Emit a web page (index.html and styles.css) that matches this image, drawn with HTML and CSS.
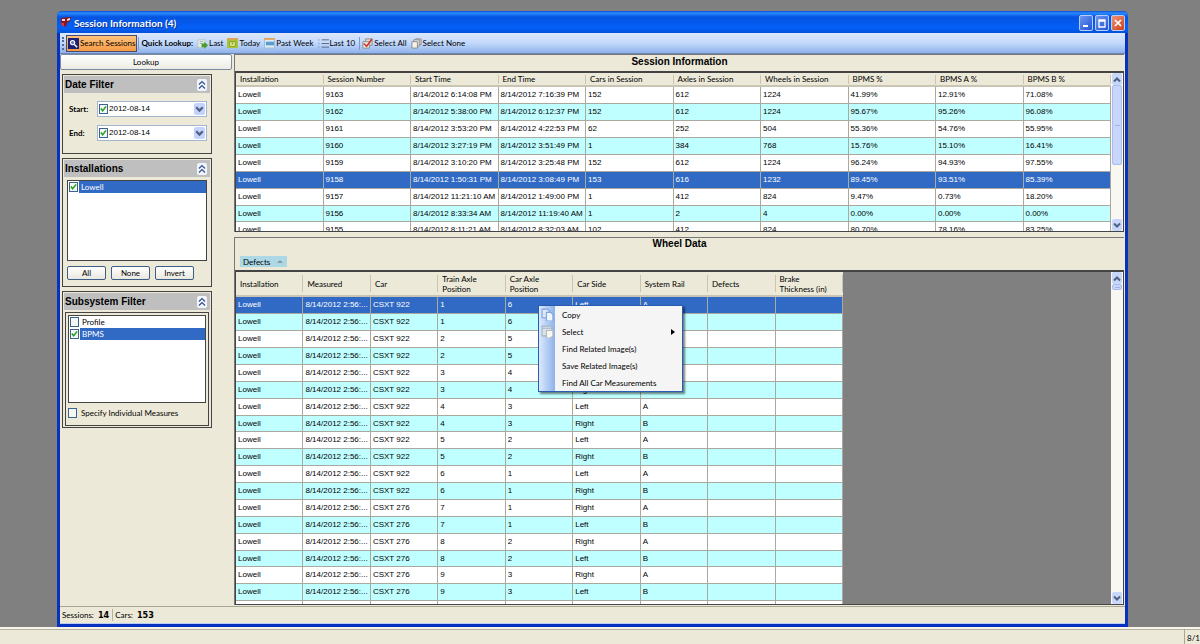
FILE: index.html
```html
<!DOCTYPE html>
<html lang="en">
<head>
    <meta charset="UTF-8">
    <meta name="viewport" content="width=device-width, initial-scale=1.0">
    <title>Session Information (4)</title>
    <link rel="stylesheet" href="styles.css">
</head>
<body>
    <!-- shared icon shapes -->
    <svg class="defs" width="0" height="0" aria-hidden="true">
        <symbol id="down" viewBox="0 0 10 10"><path d="M2 3l3 3 3-3" fill="none" stroke="#4d6185" stroke-width="2"/></symbol>
        <symbol id="up" viewBox="0 0 10 10"><path d="M2 7l3-3 3 3" fill="none" stroke="#4d6185" stroke-width="2"/></symbol>
        <symbol id="collapse" viewBox="0 0 10 10"><path d="M2 5l3-3 3 3M2 9l3-3 3 3" fill="none" stroke="#33508f" stroke-width="1.2"/></symbol>
    </svg>

    <main class="desktop">
        <div class="window">
            <header class="titlebar">
                <svg class="app-icon" viewBox="0 0 12 12"><path d="M1 1l10-1-1 4-3 2-1 4-2-1V6H1z" fill="#8e1520"/><path d="M2 2h3v2H2zM7 2l3-1v2L7 4z" fill="#f5dede"/><path d="M1 6h3v3H2z" fill="#d63a32"/></svg>
                <h1>Session Information (4)</h1>
                <button class="win-btn" aria-label="Minimize"><svg viewBox="0 0 12 14"><path d="M3 10h5" stroke="#fff" stroke-width="2"/></svg></button>
                <button class="win-btn" aria-label="Maximize"><svg viewBox="0 0 12 14"><path d="M3 4h6v7H3zM3 5h6" fill="none" stroke="#fff" stroke-width="1.3"/></svg></button>
                <button class="win-btn close" aria-label="Close"><svg viewBox="0 0 12 14"><path d="M3 4l6 6M9 4l-6 6" stroke="#fff" stroke-width="1.7"/></svg></button>
            </header>

            <nav class="toolbar">
                <span class="grip"></span>
                <button class="tool active">
                    <svg viewBox="0 0 12 12"><path d="M0 0h12v12H0z" fill="#1d1f72"/><circle cx="5" cy="5" r="2.3" fill="#5f78c8" stroke="#fff" stroke-width="1.2"/><path d="M7 7l3 3" stroke="#fff" stroke-width="1.6"/></svg>Search Sessions
                </button>
                <span class="sep"></span>
                <strong>Quick Lookup:</strong>
                <button class="tool"><svg viewBox="0 0 12 12"><path d="M1 2h8v8H1z" fill="#e7f0e2" stroke="#b9cbb9"/><path d="M3 4h4M3 6h3" stroke="#8fb0c8"/><path d="M5 6h3V4l4 4-4 4v-2H5z" fill="#4a9c34"/></svg>Last</button>
                <button class="tool"><svg viewBox="0 0 12 12"><path d="M0 1h12v10H0z" fill="#a9c23a"/><path d="M0 0h12v2H0z" fill="#e2a456"/><path d="M3 4h6v5H3z" fill="#eef59c" stroke="#7f9a20"/><path d="M5 5h2v2H5z" fill="#7f9a20"/></svg>Today</button>
                <button class="tool"><svg viewBox="0 0 12 12"><path d="M0 1h12v10H0z" fill="#dcebf5"/><path d="M0 0h12v2H0z" fill="#e2a456"/><path d="M2 4h9v4H2z" fill="#5b9cd0"/><path d="M.5 2v9h11V2" fill="none" stroke="#9fb7cc"/></svg>Past Week</button>
                <button class="tool"><svg viewBox="0 0 12 12"><path d="M4 2h8M4 6h8M4 10h8" stroke="#56657c"/><path d="M1 1v10" stroke="#7ea0c8" stroke-dasharray="2 2"/></svg>Last 10</button>
                <span class="sep"></span>
                <button class="tool"><svg viewBox="0 0 12 12"><path d="M4 1h7v7H4z" fill="#ddd" stroke="#888"/><path d="M1 4h7v7H1z" fill="#f4f0ea" stroke="#888"/><path d="M2 6l3 3 6-8" fill="none" stroke="#d3372b" stroke-width="1.8"/></svg>Select All</button>
                <button class="tool"><svg viewBox="0 0 12 12"><path d="M5 1h6v6H5z" fill="#ddd" stroke="#888"/><path d="M3 2h6v7H3z" fill="#eee" stroke="#888"/><path d="M1 4h6v7H1z" fill="#f4f0ea" stroke="#888"/></svg>Select None</button>
            </nav>

            <div class="content">
                <aside class="sidebar">
                    <button class="lookup">Lookup</button>

                    <section class="box">
                        <h2>Date Filter <button class="collapse" aria-label="Collapse"><svg><use href="#collapse"/></svg></button></h2>
                        <div class="dates">
                            <label for="start">Start:</label>
                            <div class="picker">
                                <input type="checkbox" aria-label="Use start date" checked>
                                <input type="text" id="start" value="2012-08-14">
                                <button aria-label="Open start calendar"><svg><use href="#down"/></svg></button>
                            </div>
                            <label for="end">End:</label>
                            <div class="picker">
                                <input type="checkbox" aria-label="Use end date" checked>
                                <input type="text" id="end" value="2012-08-14">
                                <button aria-label="Open end calendar"><svg><use href="#down"/></svg></button>
                            </div>
                        </div>
                    </section>

                    <section class="box">
                        <h2>Installations <button class="collapse" aria-label="Collapse"><svg><use href="#collapse"/></svg></button></h2>
                        <div class="box-body">
                            <div class="list">
                                <label class="item selected"><input type="checkbox" checked><span>Lowell</span></label>
                            </div>
                            <div class="buttons">
                                <button>All</button>
                                <button>None</button>
                                <button>Invert</button>
                            </div>
                        </div>
                    </section>

                    <section class="box">
                        <h2>Subsystem Filter <button class="collapse" aria-label="Collapse"><svg><use href="#collapse"/></svg></button></h2>
                        <div class="frame">
                            <div class="list">
                                <label class="item"><input type="checkbox"><span>Profile</span></label>
                                <label class="item selected"><input type="checkbox" checked><span>BPMS</span></label>
                            </div>
                            <label class="item measures"><input type="checkbox"><span>Specify Individual Measures</span></label>
                        </div>
                    </section>
                </aside>

                <div class="panels">
                    <section class="panel sessions">
                        <h2>Session Information</h2>
                        <div class="grid">
                            <div class="view">
                                <table>
                                    <thead>
                                        <tr><th>Installation</th><th>Session Number</th><th>Start Time</th><th>End Time</th><th>Cars in Session</th><th>Axles in Session</th><th>Wheels in Session</th><th>BPMS %</th><th>BPMS A %</th><th>BPMS B %</th></tr>
                                    </thead>
                                    <tbody>
                                        <tr><td>Lowell</td><td>9163</td><td>8/14/2012 6:14:08 PM</td><td>8/14/2012 7:16:39 PM</td><td>152</td><td>612</td><td>1224</td><td>41.99%</td><td>12.91%</td><td>71.08%</td></tr>
                                        <tr><td>Lowell</td><td>9162</td><td>8/14/2012 5:38:00 PM</td><td>8/14/2012 6:12:37 PM</td><td>152</td><td>612</td><td>1224</td><td>95.67%</td><td>95.26%</td><td>96.08%</td></tr>
                                        <tr><td>Lowell</td><td>9161</td><td>8/14/2012 3:53:20 PM</td><td>8/14/2012 4:22:53 PM</td><td>62</td><td>252</td><td>504</td><td>55.36%</td><td>54.76%</td><td>55.95%</td></tr>
                                        <tr><td>Lowell</td><td>9160</td><td>8/14/2012 3:27:19 PM</td><td>8/14/2012 3:51:49 PM</td><td>1</td><td>384</td><td>768</td><td>15.76%</td><td>15.10%</td><td>16.41%</td></tr>
                                        <tr><td>Lowell</td><td>9159</td><td>8/14/2012 3:10:20 PM</td><td>8/14/2012 3:25:48 PM</td><td>152</td><td>612</td><td>1224</td><td>96.24%</td><td>94.93%</td><td>97.55%</td></tr>
                                        <tr class="selected"><td>Lowell</td><td>9158</td><td>8/14/2012 1:50:31 PM</td><td>8/14/2012 3:08:49 PM</td><td>153</td><td>616</td><td>1232</td><td>89.45%</td><td>93.51%</td><td>85.39%</td></tr>
                                        <tr><td>Lowell</td><td>9157</td><td>8/14/2012 11:21:10 AM</td><td>8/14/2012 1:49:00 PM</td><td>1</td><td>412</td><td>824</td><td>9.47%</td><td>0.73%</td><td>18.20%</td></tr>
                                        <tr><td>Lowell</td><td>9156</td><td>8/14/2012 8:33:34 AM</td><td>8/14/2012 11:19:40 AM</td><td>1</td><td>2</td><td>4</td><td>0.00%</td><td>0.00%</td><td>0.00%</td></tr>
                                        <tr><td>Lowell</td><td>9155</td><td>8/14/2012 8:11:21 AM</td><td>8/14/2012 8:32:03 AM</td><td>102</td><td>412</td><td>824</td><td>80.70%</td><td>78.16%</td><td>83.25%</td></tr>
                                    </tbody>
                                </table>
                            </div>
                            <div class="scrollbar">
                                <button aria-label="Scroll up"><svg><use href="#up"/></svg></button>
                                <span class="thumb"></span>
                                <button class="last" aria-label="Scroll down"><svg><use href="#down"/></svg></button>
                            </div>
                        </div>
                    </section>

                    <section class="panel wheels">
                        <h2>Wheel Data</h2>
                        <button class="group-by">Defects <span class="sort"></span></button>
                        <div class="grid">
                            <div class="view">
                                <table>
                                    <thead>
                                        <tr><th>Installation</th><th>Measured</th><th>Car</th><th>Train Axle<br>Position</th><th>Car Axle<br>Position</th><th>Car Side</th><th>System Rail</th><th>Defects</th><th>Brake<br>Thickness (in)</th></tr>
                                    </thead>
                                    <tbody>
                                        <tr class="selected"><td>Lowell</td><td>8/14/2012 2:56:...</td><td>CSXT 922</td><td>1</td><td>6</td><td>Left</td><td>A</td><td></td><td></td></tr>
                                        <tr><td>Lowell</td><td>8/14/2012 2:56:...</td><td>CSXT 922</td><td>1</td><td>6</td><td>Right</td><td>B</td><td></td><td></td></tr>
                                        <tr><td>Lowell</td><td>8/14/2012 2:56:...</td><td>CSXT 922</td><td>2</td><td>5</td><td>Left</td><td>A</td><td></td><td></td></tr>
                                        <tr><td>Lowell</td><td>8/14/2012 2:56:...</td><td>CSXT 922</td><td>2</td><td>5</td><td>Right</td><td>B</td><td></td><td></td></tr>
                                        <tr><td>Lowell</td><td>8/14/2012 2:56:...</td><td>CSXT 922</td><td>3</td><td>4</td><td>Left</td><td>A</td><td></td><td></td></tr>
                                        <tr><td>Lowell</td><td>8/14/2012 2:56:...</td><td>CSXT 922</td><td>3</td><td>4</td><td>Right</td><td>B</td><td></td><td></td></tr>
                                        <tr><td>Lowell</td><td>8/14/2012 2:56:...</td><td>CSXT 922</td><td>4</td><td>3</td><td>Left</td><td>A</td><td></td><td></td></tr>
                                        <tr><td>Lowell</td><td>8/14/2012 2:56:...</td><td>CSXT 922</td><td>4</td><td>3</td><td>Right</td><td>B</td><td></td><td></td></tr>
                                        <tr><td>Lowell</td><td>8/14/2012 2:56:...</td><td>CSXT 922</td><td>5</td><td>2</td><td>Left</td><td>A</td><td></td><td></td></tr>
                                        <tr><td>Lowell</td><td>8/14/2012 2:56:...</td><td>CSXT 922</td><td>5</td><td>2</td><td>Right</td><td>B</td><td></td><td></td></tr>
                                        <tr><td>Lowell</td><td>8/14/2012 2:56:...</td><td>CSXT 922</td><td>6</td><td>1</td><td>Left</td><td>A</td><td></td><td></td></tr>
                                        <tr><td>Lowell</td><td>8/14/2012 2:56:...</td><td>CSXT 922</td><td>6</td><td>1</td><td>Right</td><td>B</td><td></td><td></td></tr>
                                        <tr><td>Lowell</td><td>8/14/2012 2:56:...</td><td>CSXT 276</td><td>7</td><td>1</td><td>Right</td><td>A</td><td></td><td></td></tr>
                                        <tr><td>Lowell</td><td>8/14/2012 2:56:...</td><td>CSXT 276</td><td>7</td><td>1</td><td>Left</td><td>B</td><td></td><td></td></tr>
                                        <tr><td>Lowell</td><td>8/14/2012 2:56:...</td><td>CSXT 276</td><td>8</td><td>2</td><td>Right</td><td>A</td><td></td><td></td></tr>
                                        <tr><td>Lowell</td><td>8/14/2012 2:56:...</td><td>CSXT 276</td><td>8</td><td>2</td><td>Left</td><td>B</td><td></td><td></td></tr>
                                        <tr><td>Lowell</td><td>8/14/2012 2:56:...</td><td>CSXT 276</td><td>9</td><td>3</td><td>Right</td><td>A</td><td></td><td></td></tr>
                                        <tr><td>Lowell</td><td>8/14/2012 2:56:...</td><td>CSXT 276</td><td>9</td><td>3</td><td>Left</td><td>B</td><td></td><td></td></tr>
                                        <tr><td></td><td></td><td></td><td></td><td></td><td></td><td></td><td></td><td></td></tr>
                                    </tbody>
                                </table>
                            </div>
                            <div class="scrollbar">
                                <button aria-label="Scroll up"><svg><use href="#up"/></svg></button>
                                <span class="thumb"></span>
                                <button class="last" aria-label="Scroll down"><svg><use href="#down"/></svg></button>
                            </div>

                            <div class="menu">
                                <button><svg viewBox="0 0 12 12"><path d="M1 1h5l2 2v6H1z" fill="#d9e8fa" stroke="#7fa3d6"/><path d="M5 4h4l2 2v6H5z" fill="#eef5fd" stroke="#7fa3d6"/></svg>Copy</button>
                                <button><svg viewBox="0 0 12 12"><path d="M1 1h9v9H1z" fill="#dbe4ea" stroke="#a3b4c4"/><path d="M1 3h9" stroke="#a3b4c4"/><path d="M5 5h6v5l-2 2H5z" fill="#f7f7f3" stroke="#b5b9b5"/></svg>Select<span class="arrow"></span></button>
                                <button><span class="no-icon"></span>Find Related Image(s)</button>
                                <button><span class="no-icon"></span>Save Related Image(s)</button>
                                <button><span class="no-icon"></span>Find All Car Measurements</button>
                            </div>
                        </div>
                    </section>
                </div>
            </div>

            <footer class="status">
                <span>Sessions: <b>14</b></span>
                <span>Cars: <b>153</b></span>
            </footer>
        </div>
    </main>

    <footer class="taskbar"><span>8/1</span></footer>
</body>
</html>
```
FILE: styles.css
```css
* { box-sizing: border-box; }

body {
    margin: 0;
    height: 100vh;
    display: flex;
    flex-direction: column;
    overflow: hidden;
    background: #808080;
    color: #000;
    font: 8px/12px Lato, "Liberation Sans", Arial, sans-serif;
}
button, input { font: inherit; color: inherit; margin: 0; }
button { padding: 0; border: 0; background: none; }
h1, h2 { margin: 0; }
svg { display: block; flex: none; }
.defs { position: absolute; }

/* window */
.desktop { flex: 1; min-height: 0; display: flex; padding: 11px 72px 0 57px; }
.window {
    flex: 1;
    min-width: 0;
    display: flex;
    flex-direction: column;
    border: 3px solid #0831c0;
    border-top: 0;
    border-radius: 5px 5px 0 0;
    background: #ece9d8;
}
.titlebar {
    flex: none;
    display: flex;
    align-items: center;
    gap: 2px;
    height: 22px;
    margin: 0 -3px;
    padding: 2px 3px 0 3px;
    border-radius: 5px 5px 0 0;
    background: linear-gradient(#0a4fd0, #2b8bff 2px, #0453e0 6px, #0560f8 17px, #0050d8);
}
.app-icon { width: 12px; height: 12px; }
.titlebar h1 {
    flex: 1;
    font: bold 10px/14px Lato, "Liberation Sans", sans-serif;
    color: #fff;
    text-shadow: 1px 1px 0 #0a2f8c;
}
.win-btn {
    width: 14px;
    height: 16px;
    border: 1px solid #b9cdf8;
    border-radius: 2px;
    background: linear-gradient(135deg, #6d96f0, #2255d4);
}
.win-btn.close { background: linear-gradient(135deg, #ee9478, #cf4018); }

/* toolbar */
.toolbar {
    flex: none;
    display: flex;
    align-items: center;
    gap: 4px;
    height: 21px;
    padding: 0 2px;
    border-bottom: 1px solid #6a87b8;
    background: linear-gradient(#dbe8fd, #c3d9fb 50%, #8fb2ea);
}
.grip { width: 2px; height: 13px; border-left: 2px dotted #4d6cae; margin-right: -2px; }
.sep { width: 1px; height: 13px; background: #7c9bd2; margin-right: -2px; }
.tool { display: flex; align-items: center; gap: 1px; height: 17px; white-space: nowrap; }
.tool svg { width: 11px; height: 11px; }
.tool.active { padding: 0 1px; border: 1px solid #4b4b6f; background: linear-gradient(#fdc27c, #f79b45); margin-right: -3px; }

/* sidebar */
.content { flex: 1; min-height: 0; display: flex; }
.sidebar { flex: none; width: 173px; }
.lookup {
    display: block;
    width: 172px;
    height: 16px;
    border: 1px solid #7b8ba0;
    border-radius: 2px;
    background: linear-gradient(#fff, #ecebe4);
}
.box {
    width: 150px;
    margin: 4px 2px 0;
    border: 1px solid #444;
    padding: 1px;
}
.box h2 {
    display: flex;
    align-items: center;
    justify-content: space-between;
    height: 17px;
    padding: 0 3px 0 1px;
    background: #bfbfbf;
    font: bold 10px/12px "Liberation Sans", Arial, sans-serif;
}
.collapse { width: 10px; height: 12px; border-radius: 2px; background: #f1f4fa; }
.collapse svg { width: 10px; height: 11px; }

.dates {
    display: grid;
    grid-template-columns: 28px 110px;
    row-gap: 8px;
    align-items: center;
    padding: 8px 0 11px 5px;
    font-weight: bold;
}
.picker {
    display: flex;
    align-items: center;
    height: 16px;
    padding: 1px;
    border: 1px solid #a3b6ce;
    background: #fff;
    font-weight: normal;
}
.picker input[type="text"] { flex: 1; min-width: 0; padding: 0 1px; border: 0; background: none; font-family: "Liberation Sans", Arial, sans-serif; }
.picker button { width: 11px; height: 12px; border-radius: 2px; background: #c3d3fb; }
.picker svg { width: 11px; height: 11px; }

input[type="checkbox"] {
    flex: none;
    appearance: none;
    width: 9px;
    height: 10px;
    border: 1px solid #38648f;
    background: #f6f6f2;
}
input[type="checkbox"]:checked {
    background: #f6f6f2 url("data:image/svg+xml,%3Csvg xmlns='http://www.w3.org/2000/svg' viewBox='0 0 8 8'%3E%3Cpath d='M1 3.500l2 2.500 4-5' fill='none' stroke='%2321a121' stroke-width='1.700'/%3E%3C/svg%3E") center / 7px 8px no-repeat;
}

.box-body { padding: 3px 3px 5px; }
.list { height: 81px; border: 1px solid #444; background: #fff; }
.item { display: flex; align-items: center; height: 12px; padding-left: 1px; }
.item span { flex: 1; padding-left: 3px; line-height: 12px; }
.item.selected span { background: #316ac5; color: #fff; margin-left: 1px; padding-left: 2px; }
.buttons { display: flex; gap: 5px; padding-top: 5px; }
.buttons button {
    width: 39px;
    height: 14px;
    border: 1px solid #3b5f86;
    border-radius: 2px;
    background: linear-gradient(#fff, #e9e7de);
}
.frame { margin: 2px 1px 0; padding: 2px; border: 1px solid #444; }
.frame .list { height: 88px; }
.measures { height: 20px; padding-left: 0; }
.measures span { padding-left: 4px; }

/* right side panels */
.panels { flex: 1; min-width: 0; display: flex; flex-direction: column; padding: 0 1px; }
.panel {
    display: flex;
    flex-direction: column;
    border-left: 1px solid #777;
    border-top: 1px solid #777;
}
.panel h2 { font: bold 10px/12px "Liberation Sans", Arial, sans-serif; text-align: center; }
.sessions { flex: none; height: 178px; }
.sessions h2 { padding: 1px 0 3px; }
.wheels { flex: 1; min-height: 0; margin-top: 5px; }
.group-by {
    display: flex;
    align-items: center;
    gap: 7px;
    width: 47px;
    height: 11px;
    margin: 6px 0 3px 5px;
    padding: 0 3px;
    background: #add8e6;
}
.sort { border: 3px solid transparent; border-top: 0; border-bottom: 3px solid #8a9a9e; }

.grid {
    position: relative;
    flex: 1;
    min-height: 0;
    display: flex;
    border: 1px solid #444;
    border-width: 2px 1px 1px;
}
.view { flex: 1; min-width: 0; overflow: hidden; background: #808080; }
table { width: 100%; table-layout: fixed; border-collapse: separate; border-spacing: 0; }
.wheels table { width: 607px; }
th {
    height: 14px;
    padding: 0 4px;
    border-bottom: 2px solid #c9c5b2;
    background: #ece9d8 linear-gradient(#c9c5b2, #c9c5b2) right center / 1px 75% no-repeat;
    font-weight: normal;
    line-height: 10px;
    text-align: left;
    white-space: nowrap;
}
.wheels th { height: 25px; }
td {
    height: 17px;
    padding: 0 2px;
    border-right: 1px solid #a9a9a0;
    border-bottom: 1px solid #a9a9a0;
    background: #fff;
    font-family: "Liberation Sans", Arial, sans-serif;
    white-space: nowrap;
    overflow: hidden;
}
tr:nth-child(8n) td { height: 16px; }
tr:nth-child(even) td { background: #c0ffff; }
tr.selected td { background: #316ac5; color: #fff; }

.scrollbar { flex: none; width: 12px; display: flex; flex-direction: column; padding: 0 1px; background: #f8f7f2; }
.scrollbar button { height: 12px; border-radius: 2px; background: #c8d6fb; }
.scrollbar svg { width: 10px; height: 11px; }
.scrollbar .last { margin-top: auto; }
.thumb { height: 80px; border: 1px solid #a9bdf0; border-radius: 2px; background: #c8d6fb linear-gradient(#9db3ea, #9db3ea) center / 5px 1px no-repeat; }
.wheels .thumb { height: 6px; }

/* context menu over the wheel grid */
.menu {
    position: absolute;
    top: 33px;
    left: 302px;
    width: 145px;
    border: 1px solid #2a5cb4;
    background: linear-gradient(90deg, #dce9fc, #8fb2ec 16px, #f5f5f5 16px);
    box-shadow: 2px 2px 2px rgba(0, 0, 0, 0.5);
}
.menu button { display: flex; align-items: center; gap: 8px; width: 100%; height: 17px; padding: 0 7px 0 2px; }
.menu svg, .no-icon { width: 13px; height: 13px; }
.arrow { margin-left: auto; border: 3px solid transparent; border-left: 4px solid #000; border-right: 0; }

/* status bar and taskbar */
.status { flex: none; display: flex; height: 18px; align-items: center; margin-top: 1px; border-top: 1px solid #a9a694; border-bottom: 1px solid #b9cdf8; }
.status span { padding: 0 3px 0 2px; border-right: 1px solid #b5b19e; white-space: pre; }
.status span:last-child { border: 0; }
.status b { font: bold 9px/12px "DejaVu Sans Condensed", "DejaVu Sans", sans-serif; padding-left: 2px; }
.taskbar { flex: none; display: flex; justify-content: flex-end; height: 17px; border-top: 2px solid #f7f4ea; background: #ece9d8; box-shadow: inset 0 1px #b5b19e; }
.taskbar span { padding: 3px 0 0 2px; border-left: 1px solid #a9a694; }
```
